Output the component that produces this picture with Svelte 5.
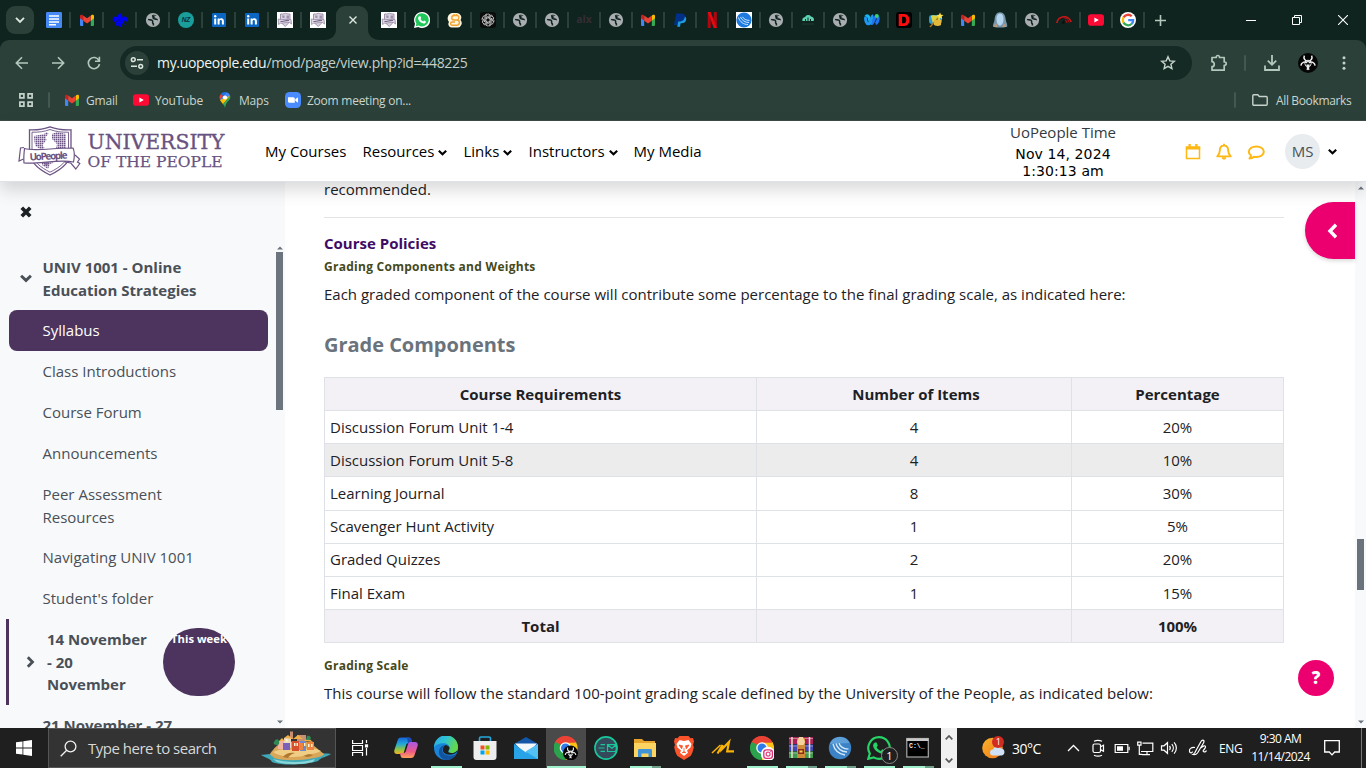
<script>
  const tabs = [
    ['docs', 33], ['gmail', 33], ['lily', 33], ['globe', 33], ['nz', 33], ['linkedin', 33], ['linkedin', 33], ['crest', 33], ['crest', 32],
    ['active', 39],
    ['crest', 33], ['whatsapp', 33], ['honey', 33], ['gpt', 33], ['globe', 32], ['globe', 32], ['alx', 32], ['globe', 32], ['gmail', 32],
    ['paypal', 32], ['netflix', 32], ['signal', 32], ['globe', 32], ['cloud', 32], ['globe', 32], ['webex', 32], ['dee', 32],
    ['wand', 32], ['gmail', 32], ['ghost', 32], ['globe', 32], ['gauge', 32], ['youtube', 32], ['google', 32]
  ];
  const nav = [['My Courses', 97.5, false], ['Resources', 101, true], ['Links', 65, true], ['Instructors', 105, true], ['My Media', 80, false]];
  const lessons = [['Class Introductions', 41], ['Course Forum', 41], ['Announcements', 41], ['Peer Assessment Resources', 63], ['Navigating UNIV 1001', 40], ["Student's folder", 42]];
  const rows = [
    ['Course Requirements', 'Number of Items', 'Percentage', 'head'],
    ['Discussion Forum Unit 1-4', '4', '20%', ''],
    ['Discussion Forum Unit 5-8', '4', '10%', 'hover'],
    ['Learning Journal', '8', '30%', 'tall'],
    ['Scavenger Hunt Activity', '1', '5%', 'up'],
    ['Graded Quizzes', '2', '20%', 'up'],
    ['Final Exam', '1', '15%', ''],
    ['Total', '', '100%', 'head']
  ];
  const apps = [
    ['copilot', 41, ''], ['edge', 39, 'run'], ['store', 40, ''], ['mail', 41, ''], ['chromebio', 40, 'run current'], ['speed', 40, ''],
    ['explorer', 38, 'run multi'], ['brave', 40, ''], ['em', 38, ''], ['chromeinsta', 40, 'run'], ['winrar', 38, 'run multi'],
    ['signalround', 40, 'run multi'], ['wa', 38, 'run'], ['cmd', 39, 'run multi']
  ];
</script>

{#snippet bio()}
  <circle cx="10" cy="10" r="10" fill="#050505" />
  <g fill="none" stroke="#eee" stroke-width="1.5">
    <path d="M6.400 2.600a4 4 0 1 0 7.200 0" />
    <path d="M2.900 12.600a4 4 0 1 1 5.800 4" />
    <path d="M17.100 12.600a4 4 0 1 0-5.800 4" />
    <circle cx="10" cy="10.400" r="3.200" stroke-width=".9" />
  </g>
  <circle cx="10" cy="10.400" r="1.200" fill="#050505" />
{/snippet}

{#snippet chromeDisc()}
  <path d="M12 12L1.600 6A12 12 0 0 1 22.400 6z" fill="#ea4335" />
  <path d="M12 12L22.400 6A12 12 0 0 1 12 24z" fill="#fbc116" />
  <path d="M12 12L12 24A12 12 0 0 1 1.600 6z" fill="#2ba24c" />
  <path d="M12 6.500h10.700L17 15z" fill="#fbc116" />
  <path d="M1.600 6L7 15l5-3-1-5.500z" fill="#2ba24c" />
  <path d="M1.600 6A12 12 0 0 1 22.400 6.500H12L8 9z" fill="#ea4335" />
  <circle cx="12" cy="12" r="5.800" fill="#fff" />
  <circle cx="12" cy="12" r="4.500" fill="#2f7bea" />
{/snippet}

{#snippet glyph(name)}
  <svg class="ic" viewBox="0 0 16 16" width="16" height="16" aria-hidden="true">
    {#if name === 'docs'}
      <rect width="16" height="16" rx="1.300" fill="#4688f4" />
      <path d="M3 4h10M3 7h10M3 9.900h10M3 12.800h7" stroke="#fff" stroke-width="1.500" />
    {:else if name === 'gmail'}
      <path d="M1 4.200V13a.9.9 0 0 0 .9.9h2.300V7z" fill="#4285f4" />
      <path d="M15 4.200V13a.9.9 0 0 1-.9.9h-2.300V7z" fill="#34a853" />
      <path d="M1 4v2.200l3.200 2.500V4L3.500 3C2.500 2.200 1 2.800 1 4z" fill="#c5221f" />
      <path d="M15 4v2.200l-3.200 2.500V4l.7-1c1-.8 2.500-.2 2.500 1z" fill="#fbbc04" />
      <path d="M4.200 3.400L8 6.300l3.800-2.900v5.300L8 11.500 4.200 8.700z" fill="#ea4335" />
    {:else if name === 'lily'}
      <g fill="#0000fa">
        <path d="M8 1C5.500 3 5 4.800 6 6.800L7.200 9.500h1.600L10 6.800C11 4.800 10.500 3 8 1z" />
        <path d="M7 10.500C6.800 7 5.500 4.500 3.200 4.500 1 4.600.1 7.200 1.200 9.200c1 1.300 2.500.5 2.200-.9 1-.2 1.700 1 1.800 2.200zM9 10.500c.2-3.500 1.500-6 3.800-6 2.200.1 3.100 2.700 2 4.700-1 1.300-2.500.5-2.200-.9-1-.2-1.700 1-1.800 2.200z" />
        <path d="M4 9.600h8v1.800H4zM6.500 11h3l.4 2.300L8 15.500l-1.900-2.200zM5.500 11.200L4.600 14l-1.500-1.700zM10.500 11.200l.9 2.800 1.500-1.700z" />
      </g>
    {:else if name === 'globe'}
      <circle cx="8" cy="8" r="7.100" fill="#a9aeb0" />
      <path d="M3 7.600c1.200.4 2.300.2 3.400.4 1.200.2 1.400 1.200 1.100 1.900-.3.900.4 1.300.8 1.900.2.600 0 1.200.2 1.700M8 3.200c-.6.700-.3 1.300.7 1.600.6.400.2 1-.5 1.300.6.900 1.600 1 2.700 1 .8.100 1 .7 1.900.7" fill="none" stroke="#12271f" stroke-width="1.600" />
      <path d="M2.300 8.300c1.500.5 3 .6 4.200 1 .6.700-.5 1.400.3 2.500.5.700.5 1 .6 1.800C4.500 13 2.500 11 2.300 8.300z" fill="#a9aeb0" />
      <path d="M8.300 2.400c1.500.100 2.500.6 3.300 1.400-1 .5-2.300.3-2.800 1.200.3.900 1.400.7 2.400 1-.7.700-1.800.5-2.600.2-1-.5-1.300-1.800-.3-3.800z" fill="#12271f" opacity=".7" />
    {:else if name === 'nz'}
      <circle cx="8" cy="8" r="8" fill="#199e9b" />
      <text x="8" y="10.400" font-size="6.500" font-weight="700" font-style="italic" text-anchor="middle" fill="#0b2b3a" font-family="Liberation Sans">NZ</text>
    {:else if name === 'linkedin'}
      <rect x="1" y="1" width="14" height="14" rx="1" fill="#0a66c2" />
      <path d="M3.200 6.400h2v6.200h-2zM6.600 6.400h1.900v.9c.9-1.500 4.400-1.600 4.400 1.700v3.600h-2V9.400c0-1.900-2.300-1.700-2.300 0v3.200h-2z" fill="#fff" />
      <circle cx="4.200" cy="4.300" r="1.200" fill="#fff" />
    {:else if name === 'crest'}
      <rect width="16" height="16" fill="#fff" />
      <path d="M3.500 2c3 .3 5-.8 5-.8s2 1 4.500.8v7.500L8.300 14.500 3.500 10z" fill="#d9d4df" stroke="#8d7f9c" stroke-width=".8" />
      <path d="M5 3.500h2.500V6H5.500zM9.500 3.500H12v3H9.500z" fill="#a093ad" />
      <path d="M1.200 7C5 8.500 11 6.500 14 7.500l.5 4.500-2-1.500c-3-.5-6 1-9 .7L1.500 12.500z" fill="#ded9e3" stroke="#8d7f9c" stroke-width=".7" />
      <path d="M3.500 9.500c3 0 5.500-1.300 8.500-1" stroke="#75638a" fill="none" stroke-width="1.200" />
    {:else if name === 'whatsapp'}
      <path d="M8 0a8 8 0 0 0-7 11.800L0 16l4.300-1A8 8 0 1 0 8 0z" fill="#fff" />
      <path d="M8 1.300a6.600 6.600 0 0 0-5.600 10.200L1.800 14.200l2.800-.7A6.600 6.600 0 1 0 8 1.300z" fill="#20c75a" />
      <path d="M5.400 4.200l1 .1.800 1.800-.7 1c.6 1.200 1.400 1.900 2.700 2.500l.9-1 1.800.9c.1 1.500-1.300 2.200-2.500 2-2.700-.6-4.900-2.900-5.300-5.100-.1-.9.500-1.900 1.300-2.200z" fill="#fff" />
    {:else if name === 'honey'}
      <path d="M5 1h5a4.500 4.500 0 0 1 3.500 7A4.500 4.500 0 0 1 11 15.500H4.500A3.500 3.500 0 0 1 2 10 5.500 5.500 0 0 1 5 1z" fill="#fff4dd" />
      <path d="M11 3.500H7a2.200 2.200 0 0 0 0 4.500h2.800a2.500 2.500 0 0 1 0 5.200H5.200a1.500 1.500 0 0 1 0-3.200H8M11 3.500c1.500 1.500 1 3.500-.5 4.500M7 3.500V2M9.500 3.500V2" stroke="#f0a330" fill="none" stroke-width="1.400" />
    {:else if name === 'gpt'}
      <rect width="16" height="16" rx="3" fill="#0a0b0b" />
      <g fill="none" stroke="#dcdcdc" stroke-width=".75">
        {#each [0, 60, 120, 180, 240, 300] as r}
          <path d="M6 9V4.300a2.300 2.300 0 0 1 4.100-1.400M6 5.600L9.700 3.500a2.300 2.300 0 0 1 3 .6" transform="rotate({r} 8 8)" />
        {/each}
      </g>
    {:else if name === 'alx'}
      <text x="8" y="11" font-size="10.500" font-weight="700" text-anchor="middle" fill="#352d33" font-family="Open Sans">alx</text>
    {:else if name === 'paypal'}
      <path d="M4.200 1.500h5.400c2.700 0 3.900 1.700 3.400 4-.5 2.700-2.500 3.900-5 3.900H6.300L5.500 13H2z" fill="#003087" />
      <path d="M12.900 4.500c1.300.8 1.500 2.100 1.200 3.500-.5 2.300-2.300 3.300-4.500 3.300h-1L8 14.800H5.200l1-5.400H8c2.500 0 4.400-1.500 4.900-4.900z" fill="#1f9be0" />
    {:else if name === 'netflix'}
      <path d="M3.700 0h3v16h-3zM9.800 0h3v16h-3z" fill="#b1060f" />
      <path d="M3.700 0h3l6.100 16h-3z" fill="#e50914" />
    {:else if name === 'signal'}
      <rect width="16" height="16" fill="#fff" />
      <circle cx="8" cy="8" r="7.600" fill="#1d7be0" />
      <path d="M2.500 5.500c1.500 4.500 5 7 9.500 7M4.500 5c1.500 3.500 4.500 5.500 8.500 5.500M6.500 4.800c1.200 2.200 3.500 3.600 7 3.600" fill="none" stroke="#cfe6ff" stroke-width="1" />
    {:else if name === 'cloud'}
      <path d="M2.500 9a3 3 0 0 1 2.600-4A3.500 3.500 0 0 1 11 4.500 3 3 0 0 1 13.500 9z" fill="#5ed3b3" />
      <path d="M5.500 9V7M8 9V5.500M10.500 9V7" stroke="#12271f" />
      <path d="M2 12h12" stroke="#1e3a35" />
    {:else if name === 'webex'}
      <g fill="none" stroke-width="3">
        <path d="M1.800 4.800c1-1.700 2.900-.9 3.300 1.200.6 3 1 5.500 2.700 5.500" stroke="#16b7ea" />
        <path d="M7.800 11.500c1.900 0 2.200-7.500 5-7.500 2.300.3 1.500 6.500-1.300 7.500" stroke="#1f74f2" />
        <path d="M1.800 5C1 8 2.700 12.500 5 11.700 7 11 7 4.500 9.300 3.800" stroke="#2196f3" />
      </g>
      <circle cx="12.800" cy="4" r="1.900" fill="#3ad45f" />
    {:else if name === 'dee'}
      <rect width="16" height="16" rx="3" fill="#000" />
      <path d="M2.700 2h5.500c7 0 7 12 0 12H2.700zM6 4.800v6.400h2c3 0 3-6.400 0-6.400z" fill="#fb0d0d" fill-rule="evenodd" />
    {:else if name === 'wand'}
      <rect x="1" y="3" width="13" height="9" rx="3" fill="#2c9bd6" />
      <path d="M3 4c3-2 5 1 8-1l2 7c-3 2-6 0-8 2z" fill="#dcd342" />
      <path d="M2 15L12 4" stroke="#a5742a" stroke-width="1.500" />
      <path d="M12 .5l1 2.200 2.500.2-1.900 1.700.6 2.400-2.200-1.300L9.800 7l.6-2.400-1.900-1.700 2.500-.2z" fill="#ffe44d" />
      <path d="M6 8h7v5c-2 1.500-5 1-7 0z" fill="#e3b93c" />
    {:else if name === 'ghost'}
      <path d="M8 .3c3.800 0 5.300 3 5.700 7.200.3 3 2 4 1.500 7.200l-3.700.8h-7L1 14.700C.5 12 2.200 11 2.500 8 3 3.500 4.200.3 8 .3z" fill="#7796aa" />
      <path d="M8 1.500c2.800 0 3.700 3.500 3.500 6.200-.2 3-1.500 5.800-3.500 5.800S4.700 11 4.500 8C4.300 5.300 5.200 1.500 8 1.500z" fill="#b4d5ee" />
      <path d="M2 15c0-2 1-3 2.500-3.500L5.500 15zM14 15c0-2-1-3-2.500-3.500L10.500 15z" fill="#b99a7f" />
    {:else if name === 'gauge'}
      <path d="M.8 11A7.400 7.400 0 0 1 15.200 10" fill="none" stroke="#cd1719" stroke-width="1.600" />
      <path d="M8 5.800a5 5 0 0 1 5 4.700M8.800 8a3 3 0 0 1 2 2.800M3.300 5.300l1.500 1.500" fill="none" stroke="#a31315" stroke-width="1.200" />
      <path d="M5.500 11.500L8.500 7v4.500z" fill="#0a0f0d" />
    {:else if name === 'youtube'}
      <rect y="2.300" width="16" height="11.400" rx="2.800" fill="#fb0a33" />
      <path d="M6.400 5.500v5L10.800 8z" fill="#fff" />
    {:else if name === 'google'}
      <circle cx="8" cy="8" r="8" fill="#fff" />
      <g fill="none" stroke-width="2.300">
        <path d="M11.700 4.300A5.200 5.200 0 0 0 3.500 5.400" stroke="#ea4335" />
        <path d="M3.500 5.400a5.200 5.200 0 0 0 0 5.200" stroke="#fbbc05" />
        <path d="M3.500 10.600a5.200 5.200 0 0 0 8 1.400" stroke="#34a853" />
        <path d="M11.500 12A5.200 5.200 0 0 0 13.200 8.100H8.200" stroke="#4285f4" />
      </g>
    {:else if name === 'pin'}
      <path d="M8 0a5.500 5.500 0 0 0-4.200 2L6.300 4.200 9.700.3A5.500 5.500 0 0 0 8 0z" fill="#1a73e8" />
      <path d="M3.800 2A5.500 5.500 0 0 0 3 7.500l3.300-3.300z" fill="#ea4335" />
      <path d="M9.700.3a5.500 5.500 0 0 1 3.500 3.500L6.500 11C5 9.500 3.500 8.500 3 7.500z" fill="#4285f4" />
      <path d="M13.200 3.800L6 12.200C4.500 10 3.500 9.200 3 8z" fill="#fbbc04" />
      <path d="M13.200 3.800c1 4-2.700 5-4.200 8.500-.5 1.200-.7 2.300-1 3.700-.4-1.700-.9-2.900-2-3.800z" fill="#34a853" />
      <circle cx="8" cy="5.500" r="2.100" fill="#fff" />
    {:else if name === 'zoom'}
      <rect width="16" height="16" rx="4.500" fill="#4a8cff" />
      <path d="M3 5.300h5.300a1.500 1.500 0 0 1 1.500 1.500v3.900H4.500A1.500 1.500 0 0 1 3 9.200zM10.300 7.200L13 5.300v5.400l-2.700-1.900z" fill="#fff" />
    {/if}
  </svg>
{/snippet}

{#snippet app(name)}
  <svg viewBox="0 0 24 24" width="24" height="24" aria-hidden="true">
    {#if name === 'copilot'}
      <defs>
        <linearGradient id="cpA" x1="0" y1="0" x2="0" y2="1"><stop offset="0" stop-color="#1664d8" /><stop offset=".4" stop-color="#22a9d8" /><stop offset=".7" stop-color="#88c34a" /><stop offset="1" stop-color="#f6b321" /></linearGradient>
        <linearGradient id="cpB" x1="0" y1="0" x2="0" y2="1"><stop offset="0" stop-color="#a957e6" /><stop offset=".6" stop-color="#ee5a86" /><stop offset="1" stop-color="#ffa35a" /></linearGradient>
      </defs>
      <path d="M7 1.500h8c1.500 0 2 1 2.400 2.300L18.500 7H15c-1.800 0-2.600 1-3 2.500L10 16c-.6 1.600-1.200 2-2.800 2H3c-2.500 0-3.200-2-2.600-4L3.400 5C4 2.500 5 1.500 7 1.500z" fill="url(#cpA)" />
      <path d="M13 1.500h2c1.500 0 2 1 2.400 2.300L18.500 7H14z" fill="#1c4bb5" />
      <path d="M17 22H9c-1.500 0-2-1-2.400-2.300L5.800 17H9c1.800 0 2.600-1 3-2.500L14 8c.6-1.600 1.200-2 2.800-2H21c2.500 0 3.200 2 2.600 4l-3 9c-.6 2-1.600 3-3.600 3z" fill="url(#cpB)" />
      <path d="M10 18l2.300-8.500c.2-1 .7-1.800 1.400-2.100L11.200 16z" fill="#1f1f1f" opacity=".6" />
    {:else if name === 'edge'}
      <defs>
        <linearGradient id="edA" x1="0" y1="0" x2="1" y2=".4"><stop offset="0" stop-color="#27a8e8" /><stop offset=".5" stop-color="#2fc3d2" /><stop offset="1" stop-color="#63d84c" /></linearGradient>
      </defs>
      <circle cx="12" cy="12" r="12" fill="#1a84d8" />
      <path d="M0 11.500A12 12 0 0 1 24 11c0 4-3 6-6.500 6-2.700 0-3.400-1-3.200-2 .8-.9 1.200-1.900 1.200-3 0-3-2.500-4.800-6-4.800C5 7.200 1.200 9 0 11.500z" fill="url(#edA)" />
      <path d="M15.500 12c0 1-.4 2-1.200 3-.2 1 .5 2 3.200 2 2.300 0 4.300-.8 5.500-2.300l.6.500C22 17.300 19 18.700 15.500 18.700c-4.500 0-7-2.500-6.700-5.400.1-2 1.200-3.400 2.700-4.400 2.500.3 4 1.700 4 3.100z" fill="#1e1f20" />
      <path d="M8.300 13.300C8 16.500 10.500 19.700 16 19.700c2.500 0 4.500-.7 6.300-2A12 12 0 0 1 12 24C7 23 4.500 19 5 15c.4-3 3-6 6.500-6-2 .7-3.100 2.300-3.200 4.300z" fill="#12539f" />
    {:else if name === 'store'}
      <path d="M6.500 6V2.500A1.500 1.500 0 0 1 8 1h8a1.500 1.500 0 0 1 1.500 1.500V6" fill="none" stroke="#26a9e0" stroke-width="1.600" />
      <path d="M.5 5h23v16a3 3 0 0 1-3 3h-17a3 3 0 0 1-3-3z" fill="#eee" />
      <path d="M7.500 9.500h4v4h-4z" fill="#f25022" /><path d="M12.500 9.500h4v4h-4z" fill="#7fba00" /><path d="M7.500 14.500h4v4h-4z" fill="#00a4ef" /><path d="M12.500 14.500h4v4h-4z" fill="#ffb900" />
    {:else if name === 'mail'}
      <path d="M0 8l12-7 12 7v3H0z" fill="#1457a8" />
      <path d="M1 7.500h22L14 17H10z" fill="#f4f8fb" />
      <path d="M0 8l12 8.500L24 8v15H0z" fill="#29a3e8" />
      <path d="M24 8v15L11.500 15.500z" fill="#53c0f4" />
    {:else if name === 'chromebio'}
      <g transform="translate(-.5 0)">{@render chromeDisc()}</g>
      <g transform="translate(9 9.500) scale(.75)">{@render bio()}</g>
    {:else if name === 'chromeinsta'}
      {@render chromeDisc()}
      <circle cx="18" cy="18" r="7.200" fill="#fff" />
      <rect x="13.800" y="13.800" width="8.600" height="8.600" rx="2.600" fill="none" stroke="#dc2f74" stroke-width="1.300" />
      <circle cx="18.100" cy="18.100" r="2" fill="none" stroke="#e0457b" stroke-width="1.200" />
      <circle cx="20.700" cy="15.600" r=".6" fill="#c02fa0" />
    {:else if name === 'speed'}
      <circle cx="12" cy="12" r="11.100" fill="#34495a" stroke="#19c79b" stroke-width="1.600" />
      <path d="M6.500 8.700h4.500M4.500 12h6M6.500 15.300h4.500" stroke="#19c79b" stroke-width="1.200" />
      <path d="M13.500 8.700h8.300a10 10 0 0 1 0 6.800h-8.300zM13.500 9l4.500 3.300 4-3.300" fill="none" stroke="#19c79b" stroke-width="1.200" />
    {:else if name === 'explorer'}
      <path d="M1 3h8l2 2h11v4H1z" fill="#e8a52c" />
      <path d="M1 7h22v14H1z" fill="#fcd462" />
      <path d="M5 21v-6.500c0-1 .5-1.500 1.500-1.500h11c1 0 1.500.5 1.500 1.500V21h-3.500v-3.500h-7V21z" fill="#3f94d8" />
    {:else if name === 'brave'}
      <path d="M7.500 0h9l2 2.200 2.500-.2 1 3.500L21 9l.8 2c-.7 4-2 7.500-3.300 9L12 24l-6.500-4C4.200 18.500 2.900 15 2.200 11L3 9 2 5.500 3 2l2.500.2z" fill="#fb542b" />
      <path d="M12 5l4.500-1 3 4-1 3.500-3.500 3 1 2.200-4 3.300-4-3.300 1-2.200-3.500-3L4.500 8l3-4z" fill="#fff" />
      <path d="M7 9l3.500.8-.8 3zM17 9l-3.500.8.8 3zM12 12v3.500M10 17l2-1.500 2 1.500" fill="#fb542b" stroke="#fb542b" stroke-width=".8" />
    {:else if name === 'em'}
      <path d="M1 17L9.500 9" stroke="#f9b208" stroke-width="1.600" />
      <path d="M6.500 17.500L11.500 9 10.700 13.500 18 6 16.200 15.300H23" fill="none" stroke="#f9b208" stroke-width="2.200" />
    {:else if name === 'winrar'}
      <path d="M0 1h24v7H0z" fill="#a92257" /><path d="M0 8.500h24V15H0z" fill="#4247b8" /><path d="M0 15.500h24v6.500H0z" fill="#3e9a4e" />
      <path d="M0 2.500h24M0 10h24M0 17h24" stroke="#fff" stroke-opacity=".4" />
      <path d="M3 1v21M20.500 1v21" stroke="#efe0c8" stroke-width="1.500" />
      <path d="M8 2h8v20H8z" fill="#cf8a3a" />
      <path d="M10 1h4l2 5-1.500 3h-5L8 6z" fill="#f2d29d" /><path d="M9 13h6v5H9z" fill="#8a2c1c" /><path d="M10.500 14.500h3v2h-3z" fill="#f4d34e" />
    {:else if name === 'signalround'}
      <circle cx="12" cy="12" r="11.200" fill="#3b83c6" />
      <path d="M2 8C3 3 8 1 12 1s8 2 9.500 6z" fill="#78b2e5" opacity=".6" />
      <path d="M5 8c1.500 6 5.500 10 12 11M8 7.500c1.200 4.500 5 8 11 8.500M11 7.200c1 3.200 4 5.500 9.500 6" fill="none" stroke="#d6e9fa" stroke-width="1.300" />
    {:else if name === 'wa'}
      <path d="M12 1.200A10.800 10.800 0 0 0 2.800 17.500L1.300 22.800l5.400-1.400A10.800 10.800 0 1 0 12 1.200z" fill="none" stroke="#25d366" stroke-width="2.200" />
      <path d="M8 6.500h1.500l1.300 3-1.200 1.700c1 1.800 2.300 3 4.200 3.800l1.500-1.800 3 1.400c0 2.400-2.400 3.400-4.200 3-4.200-1-7.500-4.500-8-7.800 0-1.500.8-2.700 1.900-3.300z" fill="#25d366" />
    {:else if name === 'cmd'}
      <rect x=".8" y="2.500" width="21.500" height="18.500" fill="#000" stroke="#a9a9a9" stroke-width="1.200" />
      <path d="M.5 2.500h22v2.500H.5z" fill="#c8c8c8" />
      <text x="3" y="11.500" font-size="6.500" font-weight="700" fill="#eee" font-family="Liberation Mono">C:\_</text>
    {/if}
  </svg>
{/snippet}

{#snippet caret(size = 9)}
  <svg class="caret" width={size} height={size} viewBox="0 0 10 10"><path d="M.9 3.100L5 7l4.100-3.900" fill="none" stroke="currentColor" stroke-width="2.400" /></svg>
{/snippet}

<div class="screen">
  <div class="tabstrip">
    <div class="search-tabs"><svg width="10" height="8" viewBox="0 0 10 8"><path d="M1 1.800l4 4 4-4" fill="none" stroke="#dce8e1" stroke-width="1.900" /></svg></div>
    {#each tabs as [name, w], i}
      {#if name === 'active'}
        <div class="tab-active">
          <svg class="tab-shape" width="58" height="34" viewBox="0 0 58 34"><path d="M0 34c7 0 12-4 12-11V9a9 9 0 0 1 9-9h14a9 9 0 0 1 9 9v14c0 7 5 11 12 11z" fill="#2b4038" /></svg>
          <svg class="tab-x" width="8" height="8" viewBox="0 0 8 8"><path d="M.5.500l7 7m0-7l-7 7" stroke="#dce8e1" stroke-width="1.400" /></svg>
        </div>
      {:else}
        <div class="tab" class:last={i === 8} class:tight={w === 32 && i > 9} style="width: {w}px">{@render glyph(name)}</div>
      {/if}
    {/each}
    <svg class="plus" width="11" height="11" viewBox="0 0 11 11"><path d="M5.500 0v11M0 5.500h11" stroke="#b4c9be" stroke-width="1.600" /></svg>
    <div class="winctl">
      <svg width="10" height="10" viewBox="0 0 10 10"><path d="M0 5.500h10" stroke="#fff" /></svg>
      <svg width="10" height="10" viewBox="0 0 10 10"><path d="M.5 2.500h7v7h-7zM2.500 2.500v-2h7v7h-2" fill="none" stroke="#fff" /></svg>
      <svg width="10" height="10" viewBox="0 0 10 10"><path d="M0 0l10 10M10 0L0 10" stroke="#fff" stroke-width="1.100" /></svg>
    </div>
  </div>

  <div class="toolbar-wrap">
    <div class="toolbar">
      <svg class="tb back" width="14" height="14" viewBox="0 0 14 14"><path d="M13 7H1.500M7 1.200L1.300 7 7 12.800" fill="none" stroke="#b4c9be" stroke-width="1.600" /></svg>
      <svg class="tb fwd" width="14" height="14" viewBox="0 0 14 14"><path d="M1 7h11.500M7 1.200L12.700 7 7 12.800" fill="none" stroke="#b4c9be" stroke-width="1.600" /></svg>
      <svg class="tb" width="14" height="14" viewBox="0 0 14 14"><path d="M12 4.600A5.600 5.600 0 1 0 12.500 8M12.400.800v4.400H8" fill="none" stroke="#b4c9be" stroke-width="1.600" /></svg>
      <div class="omnibox">
        <span class="site"><svg width="14" height="14" viewBox="0 0 14 14" fill="none" stroke="#dce8e1" stroke-width="1.500"><circle cx="3.300" cy="3.700" r="1.900" /><path d="M7 3.700h6M1 10.300h6" /><circle cx="10.700" cy="10.300" r="1.900" /></svg></span>
        <span class="url"><b>my.uopeople.edu</b>/mod/page/view.php?id=448225</span>
        <svg class="star" width="16" height="16" viewBox="0 0 16 16"><path d="M8 1.800l1.800 4.100 4.500.4-3.400 2.900 1 4.400L8 11.300l-3.900 2.300 1-4.400L1.700 6.300l4.500-.4z" fill="none" stroke="#c6d3cc" stroke-width="1.400" /></svg>
      </div>
      <svg class="ext" width="18" height="18" viewBox="0 0 18 18"><path d="M2 3.500h4.200c-.3-2.700 3.600-2.700 3.300 0h4.700V8c2.700-.3 2.700 3.600 0 3.300v4.900H2v-3.500c3-.2 3-5 0-5z" fill="none" stroke="#b4c9be" stroke-width="1.700" stroke-linejoin="round" /></svg>
      <i class="vsep"></i>
      <svg class="dl" width="16" height="16" viewBox="0 0 16 16"><path d="M8 0v9.500M3.800 5.600L8 9.800l4.200-4.200M1 10.500v4.500h14v-4.500" fill="none" stroke="#b4c9be" stroke-width="1.800" /></svg>
      <svg class="avatar" width="20" height="20" viewBox="0 0 20 20">{@render bio()}</svg>
      <svg width="4" height="14" viewBox="0 0 4 14" fill="#c6d3cc"><circle cx="2" cy="1.700" r="1.500" /><circle cx="2" cy="7" r="1.500" /><circle cx="2" cy="12.300" r="1.500" /></svg>
    </div>
    <div class="bookmarks">
      <svg class="grid" width="14" height="14" viewBox="0 0 14 14" fill="none" stroke="#c6d3cc" stroke-width="1.700"><path d="M.9.900h4v4h-4zM9.100.900h4v4h-4zM.9 9.100h4v4h-4zM9.100 9.100h4v4h-4z" /></svg>
      <i class="vsep"></i>
      <span class="bm" style="width: 69px">{@render glyph('gmail')}<span>Gmail</span></span>
      <span class="bm" style="width: 84px">{@render glyph('youtube')}<span>YouTube</span></span>
      <span class="bm" style="width: 68px">{@render glyph('pin')}<span>Maps</span></span>
      <span class="bm zoomlink">{@render glyph('zoom')}<span>Zoom meeting on...</span></span>
      <i class="vsep push"></i>
      <svg class="folder" width="16" height="12" viewBox="0 0 16 12"><path d="M.8 10.200V1.800a1 1 0 0 1 1-1h4l1.500 1.700h6.900a1 1 0 0 1 1 1v6.700a1 1 0 0 1-1 1H1.800a1 1 0 0 1-1-1z" fill="none" stroke="#c6d3cc" stroke-width="1.400" /></svg>
      <span class="allbm">All Bookmarks</span>
    </div>
  </div>

  <header class="site-head">
    <svg class="logo" width="210" height="52" viewBox="0 0 210 52">
      <defs>
        <pattern id="dots" width="2" height="2" patternUnits="userSpaceOnUse"><path d="M0 0h1.500v1.500H0z" fill="#6b5383" /></pattern>
      </defs>
      <g fill="none" stroke="#6b5383">
        <path d="M11.500 4.800c7 .3 14-.5 20.500-3 6.500 2.500 13.500 3.300 21 3V26c0 12-10.500 19-21 24-10.500-5-20.500-12-20.500-24z" stroke-width="1.300" fill="#fff" />
        <path d="M14 7.200c6.500.2 12.500-.6 18-2.700 5.500 2.100 11.500 2.900 18.500 2.700V26c0 10.500-9 16.500-18.500 21.200C23 42.500 14 36.500 14 26z" stroke-width=".9" />
      </g>
      <path d="M16 11l10-2 3-2 1.500 2-3 3 1 3-4 5 2 3-3 2-6-4-1-4z" fill="url(#dots)" />
      <path d="M34 9l5-2 9 2v15H38l1-5-5-5z" fill="url(#dots)" />
      <path d="M24 36l12-2-1 4-3 1-2 5-6-4z" fill="url(#dots)" />
      <path d="M24 36l6-1 1 4-3 2z" fill="#6b5383" opacity=".6" />
      <path d="M6 22.500l-3.500.5L1 36l4.500-2M57 30l4.500 4-2 3 2.300 1.500-4 5.500-5-6-5.500-1 .5-4" fill="#fff" stroke="#6b5383" stroke-width="1.200" />
      <path d="M6.500 23.500c10 3 27-.5 48.500-.5 2 4 1.500 9 .5 14-14-3.500-34 2.500-49.500 1C5.500 34 6 28 6.500 23.500z" fill="#fff" stroke="#6b5383" stroke-width="1.200" />
      <text x="11.500" y="34.500" font-family="Open Sans" font-size="10" font-weight="700" fill="#6b5383" textLength="38" transform="rotate(-3 30 32)">UoPeople</text>
      <text x="69.500" y="23.500" font-family="DejaVu Serif" font-size="20.500" fill="#69527f" stroke="#69527f" stroke-width=".35" textLength="137" lengthAdjust="spacingAndGlyphs">UNIVERSITY</text>
      <text x="69.500" y="41.500" font-family="DejaVu Serif" font-size="15.500" fill="#69527f" stroke="#69527f" stroke-width=".25" textLength="135" lengthAdjust="spacingAndGlyphs">OF THE PEOPLE</text>
    </svg>
    <nav>
      {#each nav as [label, w, more]}
        <a href="#top" style="width: {w}px">{label}{#if more}{@render caret()}{/if}</a>
      {/each}
    </nav>
    <div class="clock"><span>UoPeople Time</span><b>Nov 14, 2024</b><b>1:30:13 am</b></div>
    <div class="alerts">
      <svg width="16" height="18" viewBox="0 0 16 18"><path d="M1.500 5h13v10.500h-13z" fill="none" stroke="#fdb813" stroke-width="1.500" /><path d="M.8 3.200h14.400v3.300H.8zM3.500 1h2.300v3H3.500zM10.200 1h2.300v3h-2.300z" fill="#fdb813" /></svg>
      <svg width="16" height="18" viewBox="0 0 16 18"><path d="M8 2.600c-3 0-4.200 2.400-4.200 5 0 3-1 4.300-2.500 5.800h13.400c-1.500-1.500-2.500-2.800-2.500-5.800 0-2.600-1.200-5-4.200-5zM8 .7v2" fill="none" stroke="#fdb813" stroke-width="1.900" stroke-linejoin="round" /><path d="M5.600 14.300h4.800a2.400 2.400 0 0 1-4.800 0z" fill="#fdb813" /></svg>
      <svg width="18" height="18" viewBox="0 0 18 18"><path d="M9.300 3.500c4.300 0 7.500 2.300 7.500 5.200s-3.200 5.300-7.500 5.300c-.8 0-1.600-.1-2.300-.3-1.300 1.200-2.900 1.700-4.500 1.800.9-.9 1.400-1.900 1.500-3-1.300-.9-2.200-2.200-2.200-3.800 0-2.900 3.200-5.200 7.500-5.200z" fill="none" stroke="#fdb813" stroke-width="2" stroke-linejoin="round" /></svg>
    </div>
    <div class="initials">MS</div>
    {@render caret()}
  </header>

  <div class="body">
    <aside>
      <svg class="close" width="12" height="12" viewBox="0 0 12 12"><path d="M1.800 1.800l8.400 8.400m0-8.400l-8.400 8.400" stroke="#1d2125" stroke-width="3.700" /></svg>
      <div class="index">
        <div class="list">
          <div class="section">{@render caret(12)}<span>UNIV 1001 - Online Education Strategies</span></div>
          <div class="lesson on">Syllabus</div>
          {#each lessons as [label, h]}
            <div class="lesson" style="height: {h}px"><span>{label}</span></div>
          {/each}
          <div class="week">
            <svg width="9" height="14" viewBox="0 0 9 14"><path d="M1.800 2.200L6.500 7l-4.700 4.800" fill="none" stroke="#495057" stroke-width="2.800" /></svg>
            <span>14 November - 20 November</span>
            <em>This week</em>
          </div>
          <div class="next">21 November - 27</div>
        </div>
        <div class="rail">
          <svg width="6" height="4" viewBox="0 0 6 4"><path d="M3 .5L6 3.500H0z" fill="#6a737b" /></svg>
          <i></i>
          <svg width="6" height="4" viewBox="0 0 6 4"><path d="M3 3.500L6 .5H0z" fill="#6a737b" /></svg>
        </div>
      </div>
    </aside>

    <main>
      <p class="lead">recommended.</p>
      <hr />
      <h4>Course Policies</h4>
      <h5>Grading Components and Weights</h5>
      <p class="intro">Each graded component of the course will contribute some percentage to the final grading scale, as indicated here:</p>
      <h3>Grade Components</h3>
      <div class="table" role="table">
        {#each rows as [a, b, c, kind]}
          <div class="row {kind}" role="row"><span>{a}</span><span>{b}</span><span>{c}</span></div>
        {/each}
      </div>
      <h5 class="scale">Grading Scale</h5>
      <p class="outro">This course will follow the standard 100-point grading scale defined by the University of the People, as indicated below:</p>
      <button class="drawer" aria-label="Open block drawer"><svg width="11" height="16" viewBox="0 0 11 16"><path d="M9 1.800L3 8l6 6.200" fill="none" stroke="#fff" stroke-width="3.400" /></svg></button>
      <button class="help">?</button>
    </main>

    <div class="page-rail">
      <svg width="6" height="4" viewBox="0 0 6 4"><path d="M3 .5L6 3.500H0z" fill="#6a737b" /></svg>
      <i></i>
      <svg width="6" height="4" viewBox="0 0 6 4"><path d="M3 3.500L6 .5H0z" fill="#6a737b" /></svg>
    </div>
  </div>

  <footer class="taskbar">
    <div class="start"><svg width="16" height="16" viewBox="0 0 16 16" fill="#fff"><path d="M0 2.300l6.500-.9v6.200H0zM7.300 1.200L16 0v7.600H7.300zM0 8.400h6.500v6.200L0 13.700zM7.300 8.400H16V16l-8.700-1.200z" /></svg></div>
    <div class="search">
      <svg class="mag" width="17" height="17" viewBox="0 0 17 17"><circle cx="10.500" cy="6.500" r="5.400" fill="none" stroke="#f0f0f0" stroke-width="1.300" /><path d="M6.700 10.300L.7 16.300" stroke="#f0f0f0" stroke-width="1.300" /></svg>
      <span>Type here to search</span>
      <svg class="island" width="70" height="34" viewBox="0 0 70 34">
        <path d="M0 24c8-2 62-3 70-1-4 3-10 3-13 7-12 4-35 5-46 1-1-3-6-4-11-7z" fill="#3fa9b8" />
        <path d="M12 28c14 4 30 4 42 0l-2 3c-12 3-26 3-36 0z" fill="#8ad5d8" />
        <path d="M9 23c4-6 8-10 14-12l20-1c9 2 13 8 20 13-2 3-6 3-10 4-14 3-30 3-40 0-1-2-3-2-4-4z" fill="#d9a75a" />
        <path d="M12 21c8-4 18-3 24-1 6-3 16-4 24 0-6 3-10 3-16 4-5 3-24 3-32-3z" fill="#f0cd85" />
        <path d="M22 26c2-3 6-5 12-4-4 1-6 3-7 5zM43 25c3-2 6-2 9-1-2 1-4 2-6 2z" fill="#b0782f" />
        <path d="M29 .5h3V8h-3zM36 4h9v6h-9z" fill="#c98f72" />
        <path d="M17 10h6v8h-6z" fill="#f3b5a2" /><path d="M23 7h7v10h-7z" fill="#e9dac0" /><path d="M31 10h7v10h-7z" fill="#d84f2e" /><path d="M39 10h6v10h-6z" fill="#6d87d0" /><path d="M46 11h7v8h-7z" fill="#ef8440" /><path d="M22 12h7v7h-7z" fill="#7a61b7" /><path d="M38 12h4v7h-4z" fill="#ef8440" />
        <path d="M23 7l4-3 5 4zM32 8l5-4 5 4zM43 10l4-3 5 4zM18 10l3-3 3 3z" fill="#f2b145" />
        <path d="M33 12h1.500v3H33zM35.500 12H37v3h-1.500zM43 12h1.500v3H43zM47 13h1.500v3H47zM50 13h1.500v3H50zM25 8h1.500v2.500H25z" fill="#fff4d6" />
        <path d="M13 11c1-3 4-4 5-1s-1 5-3 4-3-1-2-3zM46 5c3-1 5 2 3 4h-4z" fill="#2f8a54" />
      </svg>
    </div>
    <div class="view"><svg width="17" height="16" viewBox="0 0 17 16" fill="none" stroke="#fff" stroke-width="1.200"><path d="M.6 0v3.500h9.900V0M.6 5.500h9.900v5H.6zM.6 16v-3.500h9.900V16M14.500 0v3M14.500 8v7.500" /><path d="M12.900 4.300h3.200v3.200h-3.200z" fill="#fff" stroke="none" /></svg></div>
    {#each apps as [name, w, state]}
      <div class="app {state}" style="width: {w}px">{@render app(name)}{#if name === 'wa'}<span class="count">1</span>{/if}</div>
    {/each}
    <div class="scroller">
      <svg width="8" height="5" viewBox="0 0 8 5"><path d="M.7 4.300L4 1l3.300 3.300" fill="none" stroke="#555" stroke-width="1.700" /></svg>
      <svg width="8" height="5" viewBox="0 0 8 5"><path d="M.7.700L4 4 7.300.700" fill="none" stroke="#555" stroke-width="1.700" /></svg>
    </div>
    <div class="weather">
      <svg width="24" height="24" viewBox="0 0 24 24"><defs><linearGradient id="sun" x1="0" y1="0" x2="1" y2="1"><stop offset="0" stop-color="#fbb32a" /><stop offset="1" stop-color="#f0781c" /></linearGradient></defs><circle cx="10.500" cy="12" r="10.300" fill="url(#sun)" /><path d="M11 19.500a3 3 0 0 1 0-6 4.500 4.500 0 0 1 8-1 3.600 3.600 0 0 1 1 7z" fill="#cfe1f7" /><circle cx="16" cy="6" r="6" fill="#d22b21" /><text x="16" y="9.200" font-size="9" text-anchor="middle" fill="#fff" font-family="Open Sans">1</text></svg>
      <span>30°C</span>
    </div>
    <div class="tray">
      <svg style="width: 26px" height="18" viewBox="0 0 26 18"><path d="M8 12l5.500-5.500L19 12" fill="none" stroke="#fff" stroke-width="1.300" /></svg>
      <svg style="width: 24px" height="18" viewBox="0 0 24 18" fill="none" stroke="#fff" stroke-width="1.200"><rect x="7" y="5" width="7.500" height="8.500" rx="1.500" /><path d="M14.500 7.800l3-1.600v6l-3-1.600M8 2.300c2.500-1.200 5.500-1.200 8 0M8 16.200c2.500 1.200 5.500 1.200 8 0" /></svg>
      <svg style="width: 24px" height="18" viewBox="0 0 24 18"><path d="M5.200 5.500h12.600v8H5.200z" fill="none" stroke="#fff" stroke-width="1.200" /><path d="M7 7.300h6v4.400H7zM18.500 7.800h1.200v3.400h-1.200z" fill="#fff" /></svg>
      <svg style="width: 24px" height="18" viewBox="1 0 24 18" fill="none" stroke="#fff" stroke-width="1.200"><path d="M9.500 4.200h10.300v8.300H8M14 12.500v3M9 15.600h8M4.700 3.200H8v3H4.700zM6.300 6.200v9.200h3" /></svg>
      <svg style="width: 25px" height="18" viewBox="1 0 25 18" fill="none" stroke="#fff" stroke-width="1.200"><path d="M4.500 6.800H7l3.500-3.100v10.600L7 11.200H4.500zM12.500 7c1 1.200 1 2.800 0 4M14.800 5.200c2 2.200 2 5.400 0 7.600M17.100 3.400c3 3.200 3 8 0 11.200" /></svg>
      <svg style="width: 31px" height="18" viewBox="1 0 31 18" fill="none" stroke="#fff" stroke-width="1.200"><path d="M11 15.500c2-1 2.500-2.500 3-4l5-9c1.500-2.500 4-1 2.500 1.500l-6 10c-1.500 2-3 1.800-4.500 1.500zM13 8.500c-4-.5-6 1.500-5.500 4 .5 2 3 1.500 3 0M19 9c2-2.500 4.500-3 4.500-1s-3.500 3.500-2 4.500 2.500 0 3-1" /></svg>
      <span class="lang">ENG</span>
      <div class="time"><span>9:30 AM</span><span>11/14/2024</span></div>
      <svg class="note" width="16" height="16" viewBox="0 0 16 16"><path d="M.7.700h14.600v11.300h-4.600L8 14.900l-2.700-2.900H.7z" fill="none" stroke="#fff" stroke-width="1.300" /></svg>
    </div>
  </footer>
</div>

<style>
  :global(body) { margin: 0; overflow: hidden; }
  .screen { width: 1366px; height: 768px; display: flex; flex-direction: column; overflow: hidden; background: #fff; font-family: "Open Sans", sans-serif; }
  svg { display: block; flex: none; }
  span, b, em, a { white-space: nowrap; }

  .tabstrip { height: 40px; flex: none; display: flex; align-items: center; background: #0f241f; }
  .search-tabs { width: 28px; height: 28px; margin: 0 4px 0 6px; border-radius: 9px; background: #2b4038; display: flex; align-items: center; justify-content: center; flex: none; }
  .tab { height: 16px; box-sizing: border-box; padding-left: 8px; border-right: 2px solid #2b4038; flex: none; }
  .tab.tight { padding-left: 7px; }
  .tab.last { border-right-color: transparent; }
  .tab-active { width: 39px; height: 40px; flex: none; position: relative; display: flex; align-items: center; }
  .tab-shape { position: absolute; left: -10px; top: 6px; }
  .tab-x { position: relative; margin-left: 15px; }
  .plus { margin-left: 10px; }
  .winctl { margin-left: auto; margin-right: 18px; display: flex; gap: 36px; }

  .toolbar-wrap { flex: none; height: 80px; background: linear-gradient(#0f241f 20px, #2b4038 20px); border-bottom: 1px solid #3d4a45; }
  .toolbar { height: 46px; background: #2b4038; border-radius: 9px 9px 0 0; display: flex; align-items: center; box-sizing: border-box; padding: 0 20px 0 15px; }
  .tb.back, .tb.fwd { margin-right: 22px; }
  .omnibox { width: 1072px; height: 34px; margin-left: 19px; flex: none; border-radius: 17px; background: #162a25; display: flex; align-items: center; box-sizing: border-box; padding: 0 16px 0 5px; }
  .site { width: 24px; height: 24px; border-radius: 50%; background: #2b4038; display: flex; align-items: center; justify-content: center; }
  .url { margin-left: 8px; font-size: 14px; letter-spacing: -.32px; color: #c3cfc9; line-height: 20px; }
  .url b { font-weight: 400; color: #f0f5f2; }
  .star { margin-left: auto; }
  .ext { margin-left: 18px; }
  .vsep { width: 2px; height: 16px; border-radius: 1px; background: #43584f; flex: none; }
  .toolbar .vsep { margin: 0 18px 0 16px; }
  .dl { margin-right: 18px; }
  .avatar { margin-right: 24px; }
  .bookmarks { height: 34px; display: flex; align-items: center; background: #2b4038; padding: 0 14px 0 19px; margin-top: -3px; }
  .bookmarks .grid { margin-right: 15px; }
  .bm { display: flex; align-items: center; gap: 6px; font-size: 12px; color: #c9d5cf; letter-spacing: -.2px; }
  .bookmarks .vsep + .bm { margin-left: 14px; }
  .zoomlink { letter-spacing: -.25px; }
  .push { margin-left: auto; }
  .folder { margin: 0 8px 0 16px; }
  .allbm { width: 76px; font-size: 12px; color: #c9d5cf; letter-spacing: -.36px; }

  .site-head { height: 60px; flex: none; position: relative; z-index: 2; background: #fff; border-bottom: 1px solid #dee2e6; box-shadow: 0 8px 16px rgba(0, 0, 0, .15); display: flex; align-items: center; color: #000; }
  .logo { margin-left: 18px; }
  nav { display: flex; margin-left: 37px; width: 745px; }
  nav a { display: flex; align-items: center; gap: 4px; color: #000; text-decoration: none; font-size: 15px; line-height: 22px; }
  nav .caret { margin-top: 2px; }
  .clock { width: 106px; display: flex; flex-direction: column; align-items: center; font-size: 15px; line-height: 23px; color: #343a40; margin-top: -2px; }
  .clock span { padding-bottom: 2px; }
  .clock b { font: 400 14px/17px "DejaVu Sans", sans-serif; letter-spacing: .1px; color: #000; }
  .alerts { display: flex; gap: 15px; margin-left: 69px; margin-top: 1px; }
  .initials { width: 35px; height: 35px; margin: 0 8px 0 20px; border-radius: 50%; background: #e9ecef; color: #495057; font-size: 15px; line-height: 35px; text-align: center; }

  .body { flex: 1; min-height: 0; display: flex; }
  aside { width: 285px; flex: none; background: #f8f9fb; display: flex; flex-direction: column; color: #495057; font-size: 15px; line-height: 22.5px; }
  .close { margin: 24px 0 28px 20px; }
  .index { flex: 1; min-height: 0; display: flex; }
  .list { width: 276px; overflow: hidden; }
  .section { display: flex; align-items: center; box-sizing: border-box; height: 64px; padding: 2px 0 0 20px; font-weight: 700; line-height: 23px; }
  .section .caret { margin-right: 10.5px; margin-top: -3px; }
  .section span, .lesson span, .week span { white-space: normal; }
  .section span { width: 180px; }
  .lesson { height: 41px; margin-left: 9px; width: 259px; box-sizing: border-box; padding-left: 33.5px; display: flex; align-items: center; }
  .lesson span { width: 170px; }
  .lesson.on { background: #4c345e; color: #fff; border-radius: 8px; }
  .week { height: 86px; margin-left: 6px; border-left: 3px solid #4c345e; box-sizing: border-box; display: flex; align-items: center; padding-left: 17px; font-weight: 700; }
  .week span { width: 105px; margin: 0 11px 0 12px; }
  .week em { width: 72px; height: 68px; border-radius: 34px; background: #4c345e; color: #fff; font: 700 11.25px/22px "Open Sans", sans-serif; text-align: center; }
  .next { padding: 9px 0 0 42.5px; font-weight: 700; white-space: nowrap; }
  .rail { width: 7px; display: flex; flex-direction: column; align-items: center; padding-bottom: 4px; }
  .rail i { width: 7px; height: 158px; margin: 2px 0 auto; background: #6c757d; }

  main { width: 960px; padding: 0 71px 0 39px; flex: none; position: relative; color: #1d2125; font-size: 15px; line-height: 22.5px; }
  p, h3, h4, h5 { margin: 0; white-space: nowrap; }
  .lead { height: 35px; margin-top: -4px; }
  hr { margin: 4px 0 0; border: 0; height: 1px; background: #e2e3e4; }
  h4 { font-size: 15px; line-height: 22px; color: #400b64; margin-top: 14px; }
  h5 { font-size: 12px; line-height: 18px; color: #45491a; margin-top: 4px; letter-spacing: .27px; }
  .intro { margin-top: 7px; height: 23px; }
  h3 { font-size: 20px; line-height: 28px; color: #6a737b; margin-top: 25px; letter-spacing: -.03px; }
  .table { margin-top: 18px; border: solid #dee2e6; border-width: 1px 0 0 1px; }
  .row { display: grid; grid-template-columns: 432px 315px 212px; height: 33px; line-height: 32px; background: #fff; }
  .row span { border: solid #dee2e6; border-width: 0 1px 1px 0; text-align: center; }
  .row span:first-child { text-align: left; padding-left: 5px; }
  .row.tall { height: 34px; }
  .row.up { line-height: 30px; }
  .row.hover { background: #ececec; }
  .row.head { background: #f3f1f5; font-weight: 700; }
  .row.head span:first-child { text-align: center; padding: 0; }
  .row.head span:nth-child(2) { padding-left: 4px; }
  .scale { margin-top: 14px; }
  .outro { margin-top: 7px; }
  .drawer { position: absolute; right: 0; top: 20px; width: 50px; height: 57px; border: 0; padding: 0 0 0 22px; border-radius: 29px 0 0 29px; background: #ec006f; box-shadow: 0 2px 4px rgba(0, 0, 0, .15); }
  .help { position: absolute; right: 21px; top: 478px; width: 36px; height: 36px; border: 0; padding: 0; border-radius: 50%; background: #ec006f; color: #fff; font: 800 17px/36px "Open Sans", sans-serif; }
  .page-rail { flex: 1; background: #f8f9fa; display: flex; flex-direction: column; align-items: center; padding: 4px 0; }
  .page-rail i { width: 7px; height: 51px; margin: 349px 0 auto; background: #6a737b; }

  .taskbar { height: 40px; flex: none; background: #1f1f1f; display: flex; color: #fff; position: relative; z-index: 3; }
  .start { width: 48px; display: flex; align-items: center; justify-content: center; }
  .search { width: 288px; box-sizing: border-box; background: #333; border: 1px solid #555; display: flex; align-items: center; padding: 0 4px 0 11px; font-size: 15px; color: #d8d8d8; letter-spacing: -.5px; }
  .search span { margin-left: 11px; }
  .island { margin-left: auto; }
  .view { width: 49px; display: flex; align-items: center; justify-content: center; }
  .app { display: flex; align-items: center; justify-content: center; position: relative; flex: none; }
  .run::after { content: ""; position: absolute; left: calc(50% - 15px); bottom: 0; width: 31px; height: 2px; background: #a0f0cc; }
  .multi::after { background: linear-gradient(90deg, #a0f0cc 22px, #6f9f8a 22px); }
  .current { background: #4a4a4a; }
  .current::after { left: 1px; width: 39px; }
  .count { position: absolute; left: 21px; top: 19px; width: 15px; height: 15px; border: 1px solid #888; border-radius: 50%; background: #1f1f1f; font-size: 11px; line-height: 15px; text-align: center; }
  .scroller { width: 16px; margin-left: 4px; background: #f0f0f0; display: flex; flex-direction: column; align-items: center; justify-content: space-between; padding: 7px 0 5px; box-sizing: border-box; }
  .weather { display: flex; align-items: center; margin-left: 25px; width: 78px; font-size: 14px; letter-spacing: -.5px; }
  .weather span { margin-left: 6px; }
  .tray { display: flex; align-items: center; flex: 1; border-right: 1px solid #777; margin-right: 4px; }
  .lang { width: 32px; margin-left: 5px; font-size: 12px; letter-spacing: -.3px; }
  .time { width: 59px; display: flex; flex-direction: column; align-items: center; font-size: 12px; line-height: 18px; letter-spacing: -.5px; }
  .note { margin-left: 14px; }
</style>
